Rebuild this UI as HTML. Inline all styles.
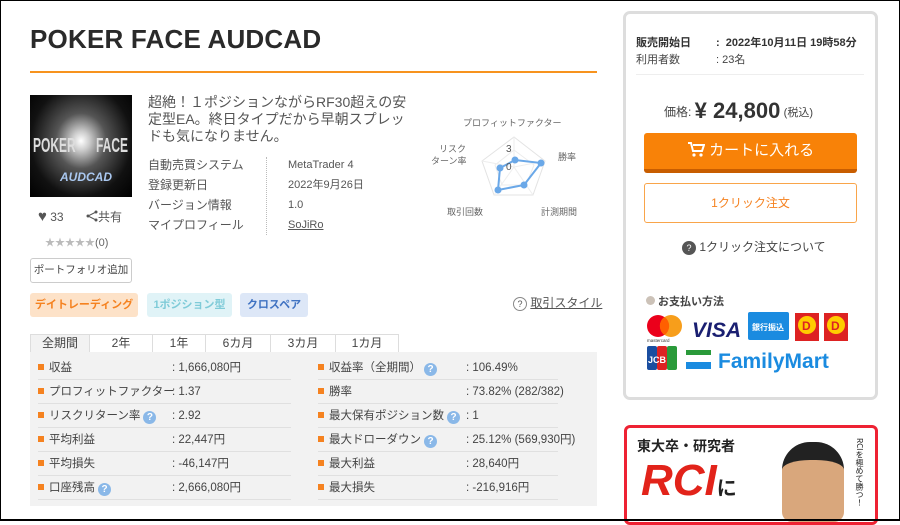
<!DOCTYPE html>
<html><head><meta charset="utf-8"><style>
*{margin:0;padding:0;box-sizing:border-box}
body{width:900px;height:521px;overflow:hidden;background:#fff;font-family:"Liberation Sans","Noto Sans CJK JP",sans-serif;color:#333;position:relative}
.frame{position:absolute;left:0;top:0;width:900px;height:521px;border:1px solid #000;border-bottom:2px solid #000;pointer-events:none;z-index:10}
.a{position:absolute;white-space:nowrap}
h1{position:absolute;left:30px;top:24px;font-size:26px;font-weight:bold;color:#2a2a2a;letter-spacing:0.2px}
.oline{position:absolute;left:30px;top:71px;width:567px;height:2px;background:#f7931e}
.s12{font-size:12px;color:#555}
.tag{position:absolute;top:293px;height:24px;line-height:24px;font-size:11px;font-weight:bold;text-align:center;border-radius:3px}
.tab{position:absolute;top:334px;height:19px;border:1px solid #ddd;border-bottom:none;background:#fff;font-size:12px;text-align:center;line-height:17px;color:#444}
.panel{position:absolute;left:30px;top:352px;width:567px;height:154px;background:#f2f2f2}
.row{position:absolute;height:24px;font-size:11.5px;color:#444;line-height:24px;border-bottom:1px solid #e0e0e0}
.sq{display:inline-block;width:6px;height:6px;background:#f58220;margin-right:5px;vertical-align:1px}
.q{display:inline-block;width:13px;height:13px;border-radius:50%;background:#8ab8e8;color:#fff;font-size:10px;line-height:13px;text-align:center;font-weight:bold;vertical-align:-1px;margin-left:3px}
.box{position:absolute;left:623px;top:11px;width:255px;height:389px;border:3px solid #ddd;border-radius:7px}
</style></head><body>
<div class="frame"></div>
<h1>POKER FACE AUDCAD</h1>
<div class="oline"></div>

<div class="a" style="left:30px;top:95px;width:102px;height:102px;background:radial-gradient(ellipse at 50% 45%,#fff 0,#ccc 12%,#555 35%,#111 70%,#000 100%);overflow:hidden">
<div class="a" style="left:3px;top:40px;font-size:20px;font-weight:bold;color:#ddd;transform:scaleX(0.6);transform-origin:left">POKER</div>
<div class="a" style="left:66px;top:40px;font-size:20px;font-weight:bold;color:#ddd;transform:scaleX(0.6);transform-origin:left">FACE</div>
<div class="a" style="left:30px;top:75px;font-size:12px;font-style:italic;font-weight:bold;color:#aac8f0">AUDCAD</div>
</div>

<div class="a" style="left:148px;top:94px;font-size:14px;line-height:17px;color:#555;white-space:normal;width:265px">超絶！１ポジションながらRF30超えの安定型EA。終日タイプだから早朝スプレッドも気になりません。</div>

<div class="a s12" style="left:148px;top:155px;line-height:20px">自動売買システム<br>登録更新日<br>バージョン情報<br>マイプロフィール</div>
<div class="a" style="left:266px;top:157px;height:78px;border-left:1px dotted #bbb"></div>
<div class="a s12" style="left:288px;top:155px;line-height:20px;font-size:11px">MetaTrader 4<br>2022年9月26日<br>1.0<br><u>SoJiRo</u></div>

<div class="a" style="left:38px;top:208px;font-size:12px;color:#555"><span style="color:#555;font-size:15px">♥</span> 33</div>
<div class="a" style="left:86px;top:208px;font-size:12px;color:#555"><svg width="12" height="12" viewBox="0 0 12 12" style="vertical-align:-1px"><circle cx="10" cy="2" r="1.5" fill="#555"/><circle cx="2" cy="6" r="1.5" fill="#555"/><circle cx="10" cy="10" r="1.5" fill="#555"/><path d="M10 2L2 6L10 10" stroke="#555" fill="none"/></svg>共有</div>
<div class="a" style="left:45px;top:234px;font-size:11px;color:#666"><span style="color:#bbb;font-size:10px">★★★★★</span>(0)</div>
<div class="a" style="left:30px;top:258px;width:102px;height:25px;border:1px solid #ccc;border-radius:3px;font-size:10.5px;line-height:23px;text-align:center;color:#444">ポートフォリオ追加</div>

<svg class="a" style="left:410px;top:105px" width="200" height="120">
<polygon points="104,32 135,56 123,90 84,90 72,56" fill="none" stroke="#e3e3e3"/>
<polygon points="104,45 124,60 116,80 92,80 85,60" fill="none" stroke="#ececec"/>
<line x1="104" y1="62" x2="104" y2="32" stroke="#eee"/><line x1="104" y1="62" x2="135" y2="56" stroke="#eee"/><line x1="104" y1="62" x2="123" y2="90" stroke="#eee"/><line x1="104" y1="62" x2="84" y2="90" stroke="#eee"/><line x1="104" y1="62" x2="72" y2="56" stroke="#eee"/>
<polygon points="105,55 131,58 114,80 88,85 90,63" fill="none" stroke="#6aa8e8" stroke-width="2"/>
<g fill="#6aa8e8"><circle cx="105" cy="55" r="3.5"/><circle cx="131" cy="58" r="3.5"/><circle cx="114" cy="80" r="3.5"/><circle cx="88" cy="85" r="3.5"/><circle cx="90" cy="63" r="3.5"/></g>
<text x="96" y="47" font-size="10" fill="#555">3</text><text x="96" y="65" font-size="10" fill="#555">0</text>
<g font-size="9" fill="#666" font-family="Liberation Sans,Noto Sans CJK JP,sans-serif">
<text x="53" y="21">プロフィットファクター</text>
<text x="148" y="55">勝率</text>
<text x="131" y="110">計測期間</text>
<text x="37" y="110">取引回数</text>
<text x="29" y="47">リスク</text><text x="21" y="59">ターン率</text>
</g></svg>
<div class="a" style="left:513px;top:294px;font-size:12px;color:#555"><span style="display:inline-block;width:14px;height:14px;border:1px solid #888;border-radius:50%;font-size:9px;text-align:center;line-height:12px;vertical-align:0">?</span> <u>取引スタイル</u></div>

<div class="tag" style="left:30px;width:108px;background:#fde2c8;color:#f58220">デイトレーディング</div>
<div class="tag" style="left:147px;width:85px;background:#e0f3f7;color:#7fcbd8">1ポジション型</div>
<div class="tag" style="left:240px;width:68px;background:#dde7f7;color:#3f72c2">クロスペア</div>

<div class="tab" style="left:30px;width:60px;background:#f2f2f2">全期間</div>
<div class="tab" style="left:89px;width:64px">2年</div>
<div class="tab" style="left:152px;width:54px">1年</div>
<div class="tab" style="left:205px;width:66px">6カ月</div>
<div class="tab" style="left:270px;width:66px">3カ月</div>
<div class="tab" style="left:335px;width:64px">1カ月</div>
<div class="panel"></div>
<div class="a" style="left:38px;top:356px">
<div class="row" style="left:0;top:0;width:253px"><span class="sq"></span>収益<span class="a" style="left:134px">: 1,666,080円</span></div>
<div class="row" style="left:0;top:24px;width:253px"><span class="sq"></span>プロフィットファクター<span class="a" style="left:134px">: 1.37</span></div>
<div class="row" style="left:0;top:48px;width:253px"><span class="sq"></span>リスクリターン率<span class="q">?</span><span class="a" style="left:134px">: 2.92</span></div>
<div class="row" style="left:0;top:72px;width:253px"><span class="sq"></span>平均利益<span class="a" style="left:134px">: 22,447円</span></div>
<div class="row" style="left:0;top:96px;width:253px"><span class="sq"></span>平均損失<span class="a" style="left:134px">: -46,147円</span></div>
<div class="row" style="left:0;top:120px;width:253px"><span class="sq"></span>口座残高<span class="q">?</span><span class="a" style="left:134px">: 2,666,080円</span></div>
<div class="row" style="left:280px;top:0;width:240px"><span class="sq"></span>収益率（全期間）<span class="q">?</span><span class="a" style="left:148px">: 106.49%</span></div>
<div class="row" style="left:280px;top:24px;width:240px"><span class="sq"></span>勝率<span class="a" style="left:148px">: 73.82% (282/382)</span></div>
<div class="row" style="left:280px;top:48px;width:240px"><span class="sq"></span>最大保有ポジション数<span class="q">?</span><span class="a" style="left:148px">: 1</span></div>
<div class="row" style="left:280px;top:72px;width:240px"><span class="sq"></span>最大ドローダウン<span class="q">?</span><span class="a" style="left:148px">: 25.12% (569,930円)</span></div>
<div class="row" style="left:280px;top:96px;width:240px"><span class="sq"></span>最大利益<span class="a" style="left:148px">: 28,640円</span></div>
<div class="row" style="left:280px;top:120px;width:240px"><span class="sq"></span>最大損失<span class="a" style="left:148px">: -216,916円</span></div>
</div>

<div class="box"></div>
<div class="a" style="left:636px;top:34px;font-size:11px;font-weight:bold;color:#333">販売開始日</div>
<div class="a" style="left:716px;top:34px;font-size:11px;font-weight:bold;color:#333">: &nbsp;2022年10月11日 19時58分</div>
<div class="a" style="left:636px;top:51px;font-size:11px;color:#444">利用者数</div>
<div class="a" style="left:716px;top:51px;font-size:11px;color:#444">: 23名</div>
<div class="a" style="left:636px;top:74px;width:228px;height:1px;background:#eee"></div>
<div class="a" style="left:664px;top:98px;font-size:12px;color:#444">価格: <b style="font-size:22px;color:#333;vertical-align:-2px">¥ 24,800</b> <span style="font-size:11px">(税込)</span></div>
<div class="a" style="left:644px;top:133px;width:213px;height:40px;background:#f88208;border-bottom:4px solid #c85d00;border-radius:3px;color:#fff;font-size:15px;text-align:center;line-height:36px"><svg width="18" height="16" viewBox="0 0 18 16" style="vertical-align:-2px"><path d="M1 2h3l2 8h9l2-6H6" stroke="#fff" stroke-width="2" fill="none"/><circle cx="7" cy="14" r="1.6" fill="#fff"/><circle cx="14" cy="14" r="1.6" fill="#fff"/></svg> カートに入れる</div>
<div class="a" style="left:644px;top:183px;width:213px;height:40px;border:1px solid #f9a54a;border-radius:3px;color:#f58220;font-size:12px;text-align:center;line-height:38px">1クリック注文</div>
<div class="a" style="left:682px;top:238px;font-size:12px;color:#444"><span style="display:inline-block;width:14px;height:14px;border-radius:50%;background:#555;color:#fff;font-size:9px;text-align:center;line-height:14px;vertical-align:0">?</span> 1クリック注文について</div>
<div class="a" style="left:646px;top:293px;font-size:11px;font-weight:bold;color:#444"><span style="display:inline-block;width:9px;height:9px;border-radius:50%;background:#ccc2b8;vertical-align:0"></span> お支払い方法</div>
<svg class="a" style="left:644px;top:310px" width="210" height="70">
<circle cx="14" cy="16" r="11" fill="#eb001b"/><circle cx="27" cy="16" r="11" fill="#f79e1b"/><path d="M20.5 7a11 11 0 0 1 0 18a11 11 0 0 1 0-18z" fill="#ff5f00"/>
<text x="3" y="32" font-size="4.5" fill="#333">mastercard</text>
<text x="48" y="27" font-size="21" font-weight="bold" font-style="italic" fill="#1a1f71" font-family="Liberation Sans">VISA</text>
<rect x="104" y="2" width="41" height="28" rx="2" fill="#1a8be0"/><text x="108" y="20" font-size="8" fill="#fff" font-weight="bold" font-family="Noto Sans CJK JP">銀行振込</text>
<rect x="151" y="3" width="24" height="28" fill="#d22"/><circle cx="163" cy="15" r="9" fill="#fc0"/><text x="158" y="20" font-size="12" font-weight="bold" fill="#d22">D</text>
<rect x="180" y="3" width="24" height="28" fill="#d22"/><circle cx="192" cy="15" r="9" fill="#fc0"/><text x="187" y="20" font-size="12" font-weight="bold" fill="#d22">D</text>
<rect x="3" y="36" width="10" height="24" rx="2" fill="#1a4ea0"/><rect x="13" y="36" width="10" height="24" rx="2" fill="#d22"/><rect x="23" y="36" width="10" height="24" rx="2" fill="#2a9a3a"/>
<text x="4" y="53" font-size="9" font-weight="bold" fill="#fff">JCB</text>
<rect x="42" y="40" width="25" height="5" fill="#2a9a3a"/><rect x="42" y="46" width="25" height="6" fill="#fff"/><rect x="42" y="52" width="25" height="7" fill="#1a8be0"/>
<text x="74" y="58" font-size="21" font-weight="bold" fill="#1a8be0" font-family="Liberation Sans">FamilyMart</text>
</svg>

<div class="a" style="left:624px;top:425px;width:254px;height:100px;border:3px solid #e23;border-radius:6px;background:#fff;overflow:hidden">
<div class="a" style="left:10px;top:8px;font-size:14px;font-weight:bold;color:#222;font-family:'Noto Sans CJK JP',sans-serif">東大卒・研究者</div>
<div class="a" style="left:14px;top:28px;font-size:44px;font-weight:bold;font-style:italic;color:#e2231a">RCI<span style="font-size:20px;color:#222;font-style:normal">に</span></div>
<div class="a" style="left:155px;top:14px;width:62px;height:80px;border-radius:28px 28px 10px 10px;background:#d9a77c;border-top:18px solid #222"></div>
<div class="a" style="left:227px;top:10px;font-size:8px;color:#222;writing-mode:vertical-rl;font-family:'Noto Sans CJK JP',sans-serif">RCIを極めて勝つ！</div>
</div>
</body></html>
